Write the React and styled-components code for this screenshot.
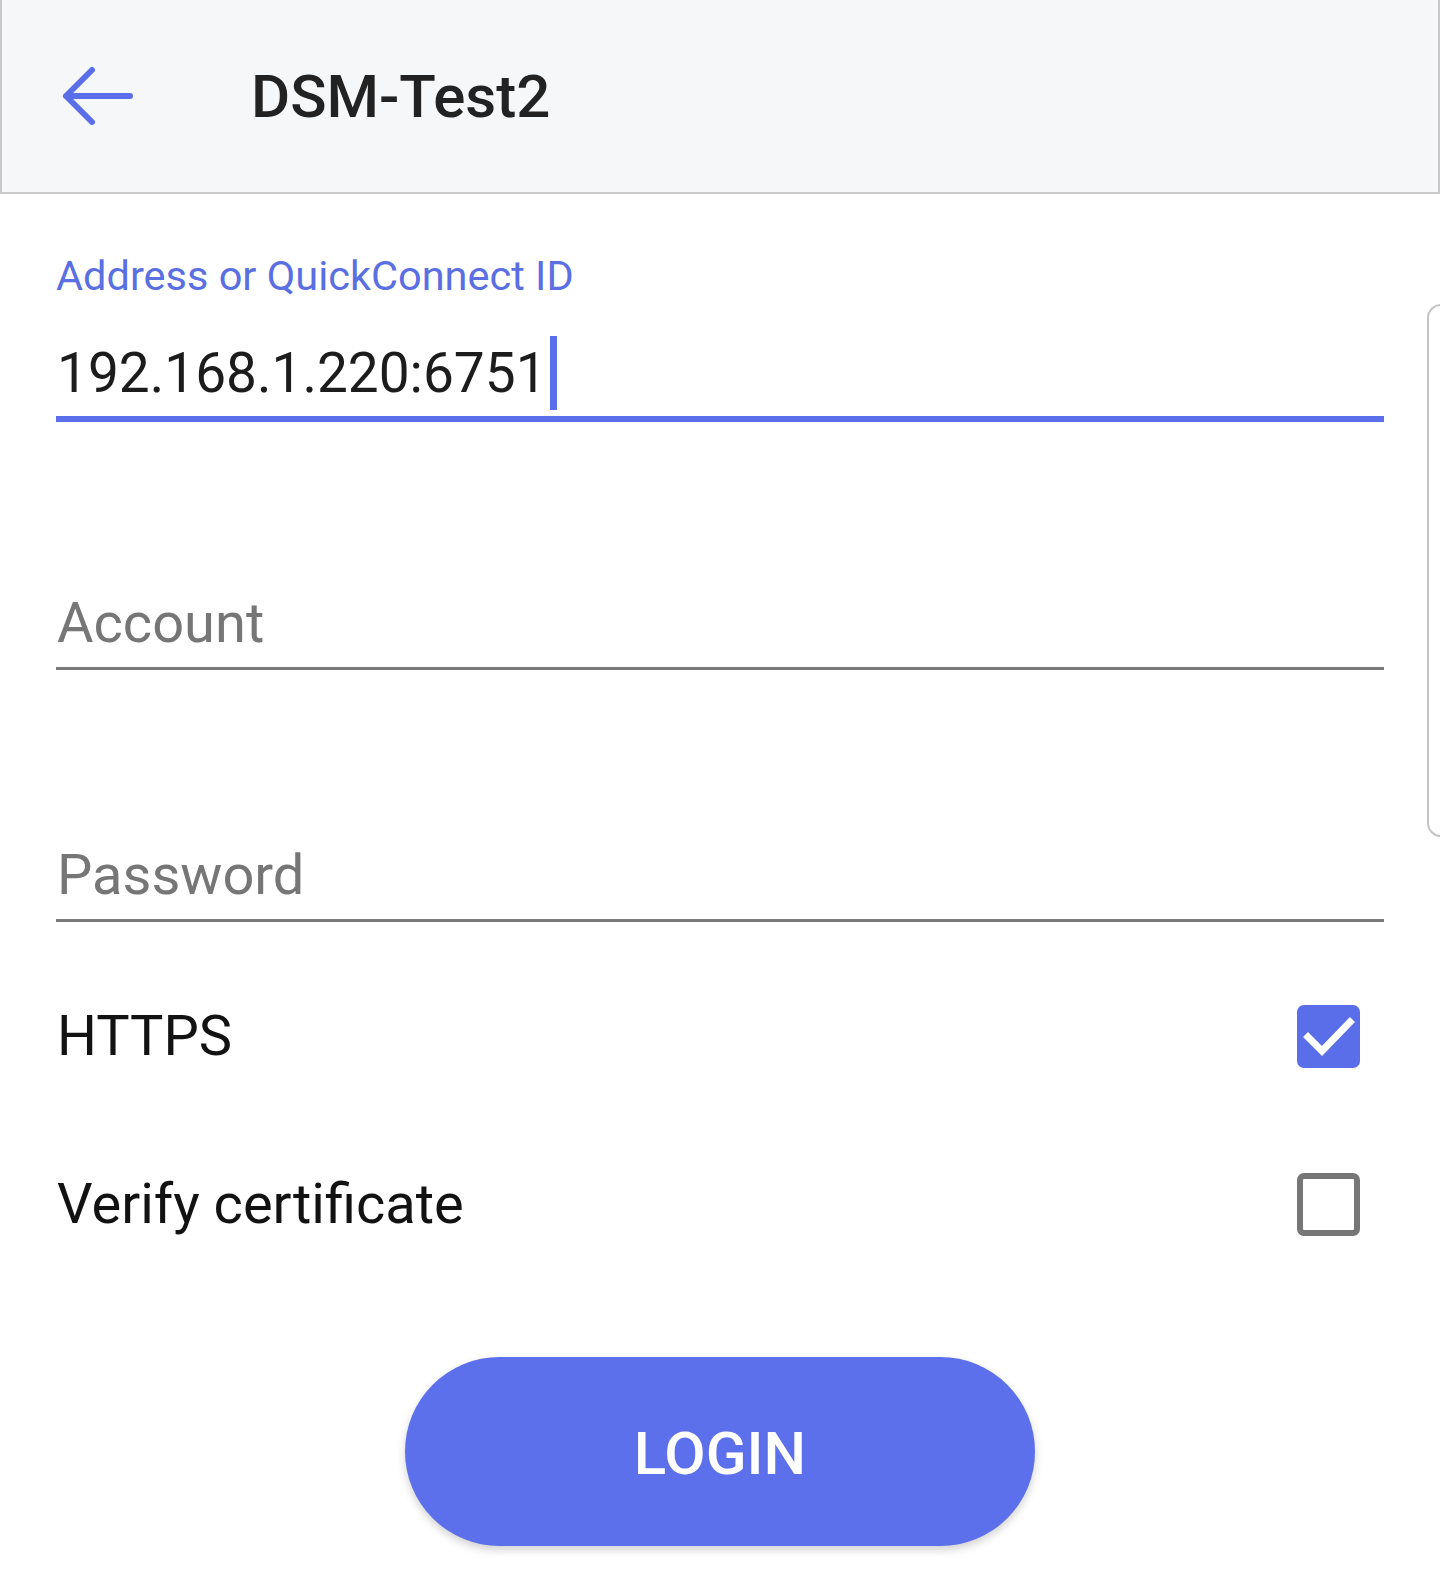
import React from "react";
import styled, { createGlobalStyle } from "styled-components";

const Global = createGlobalStyle`
  html, body { margin: 0; padding: 0; background: #ffffff; }
  body { font-family: Roboto, "Noto Sans", "Liberation Sans", sans-serif; }
  * { box-sizing: border-box; }
`;

const Page = styled.div`
  position: relative;
  width: 1440px;
  min-height: 1577px;
  overflow: hidden;
  background: #ffffff;
`;

const Header = styled.header`
  display: flex;
  align-items: center;
  height: 194px;
  background: #f6f7f9;
  border: 2px solid #c8c8c8;
  border-top: none;
  padding-left: 58px;
`;

const BackButton = styled.button`
  display: flex;
  align-items: center;
  justify-content: center;
  width: 76px;
  height: 80px;
  padding: 0;
  border: none;
  background: transparent;
  cursor: pointer;
`;

const Title = styled.h1`
  margin: 0 0 0 115px;
  font-size: 60px;
  font-weight: 500;
  color: #222222;
`;

const Form = styled.main`
  padding: 57px 56px 0 56px;
`;

const FloatLabel = styled.div`
  font-size: 41.5px;
  line-height: 50px;
  color: #5a6fe2;
`;

const Field = styled.div`
  display: flex;
  align-items: center;
  margin-top: ${(p) => p.$gap}px;
  padding: 0 0 ${(p) => (p.$focused ? 6 : 7)}px 1px;
  border-bottom: ${(p) => (p.$focused ? "6px solid #5b6ee9" : "3px solid #7a7a7a")};
`;

const FieldText = styled.span`
  font-size: ${(p) => (p.$placeholder ? 56 : 55)}px;
  line-height: 74px;
  color: ${(p) => (p.$placeholder ? "#767676" : "#1c1c1c")};
`;

const Caret = styled.span`
  display: block;
  width: 7px;
  height: 74px;
  margin-left: 3px;
  background: #5b6ee9;
`;

const Options = styled.div`
  margin-top: 30px;
`;

const OptionRow = styled.label`
  display: flex;
  align-items: center;
  justify-content: space-between;
  height: 168px;
  padding: 0 24px 0 1px;
`;

const OptionText = styled.span`
  font-size: 56px;
  color: #121212;
`;

const Box = styled.span`
  display: flex;
  align-items: center;
  justify-content: center;
  width: 63px;
  height: 63px;
  border-radius: 7px;
  background: ${(p) => (p.$checked ? "#5b6ee9" : "transparent")};
  border: ${(p) => (p.$checked ? "none" : "6px solid #767676")};
`;

const ButtonWrap = styled.div`
  display: flex;
  justify-content: center;
  margin-top: 69px;
`;

const LoginButton = styled.button`
  width: 630px;
  height: 189px;
  border: none;
  border-radius: 95px;
  background: #5c70ec;
  color: #ffffff;
  font-family: Roboto, "Noto Sans", sans-serif;
  font-size: 60px;
  font-weight: 500;
  padding-top: 4px;
  box-shadow: 0 4px 8px rgba(0, 0, 0, 0.18);
  cursor: pointer;
`;

const SideHandle = styled.div`
  position: absolute;
  top: 304px;
  left: 1427px;
  width: 40px;
  height: 533px;
  border: 2px solid #c4c4c4;
  border-radius: 14px;
`;

function Checkbox({ checked }) {
  return (
    <Box $checked={checked}>
      {checked && (
        <svg width="63" height="63" viewBox="0 0 63 63">
          <path
            d="M11 32 L25 46 L53 17"
            fill="none"
            stroke="#ffffff"
            strokeWidth="7"
            strokeLinecap="square"
          />
        </svg>
      )}
    </Box>
  );
}

export default function App() {
  return (
    <Page>
      <Global />
      <Header>
        <BackButton aria-label="Back">
          <svg width="76" height="64" viewBox="0 0 76 64">
            <path
              d="M6 32 H70 M32 6 L6 32 L32 58"
              fill="none"
              stroke="#5b6ee9"
              strokeWidth="6"
              strokeLinecap="round"
              strokeLinejoin="round"
            />
          </svg>
        </BackButton>
        <Title>DSM-Test2</Title>
      </Header>
      <Form>
        <FloatLabel>Address or QuickConnect ID</FloatLabel>
        <Field $focused $gap={35}>
          <FieldText>192.168.1.220:6751</FieldText>
          <Caret />
        </Field>
        <Field $gap={164}>
          <FieldText $placeholder>Account</FieldText>
        </Field>
        <Field $gap={168}>
          <FieldText $placeholder>Password</FieldText>
        </Field>
        <Options>
          <OptionRow>
            <OptionText>HTTPS</OptionText>
            <Checkbox checked />
          </OptionRow>
          <OptionRow>
            <OptionText>Verify certificate</OptionText>
            <Checkbox />
          </OptionRow>
        </Options>
        <ButtonWrap>
          <LoginButton>LOGIN</LoginButton>
        </ButtonWrap>
      </Form>
      <SideHandle />
    </Page>
  );
}
